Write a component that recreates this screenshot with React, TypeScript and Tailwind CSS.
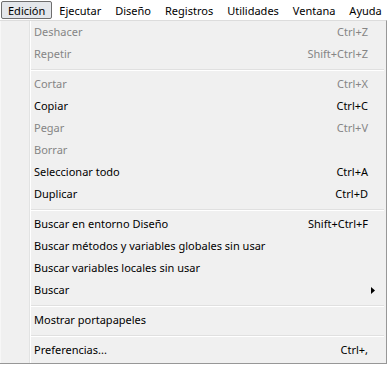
import React from "react";

type Item =
  | { type: "sep" }
  | { type: "item"; label: string; shortcut?: string; disabled?: boolean; submenu?: boolean };

const items: Item[] = [
  { type: "item", label: "Deshacer", shortcut: "Ctrl+Z", disabled: true },
  { type: "item", label: "Repetir", shortcut: "Shift+Ctrl+Z", disabled: true },
  { type: "sep" },
  { type: "item", label: "Cortar", shortcut: "Ctrl+X", disabled: true },
  { type: "item", label: "Copiar", shortcut: "Ctrl+C" },
  { type: "item", label: "Pegar", shortcut: "Ctrl+V", disabled: true },
  { type: "item", label: "Borrar", disabled: true },
  { type: "item", label: "Seleccionar todo", shortcut: "Ctrl+A" },
  { type: "item", label: "Duplicar", shortcut: "Ctrl+D" },
  { type: "sep" },
  { type: "item", label: "Buscar en entorno Diseño", shortcut: "Shift+Ctrl+F" },
  { type: "item", label: "Buscar métodos y variables globales sin usar" },
  { type: "item", label: "Buscar variables locales sin usar" },
  { type: "item", label: "Buscar", submenu: true },
  { type: "sep" },
  { type: "item", label: "Mostrar portapapeles" },
  { type: "sep" },
  { type: "item", label: "Preferencias...", shortcut: "Ctrl+," },
];

const menus = ["Edición", "Ejecutar", "Diseño", "Registros", "Utilidades", "Ventana", "Ayuda"];

export default function App() {
  return (
    <div
      className="w-[388px] h-[365px] bg-white text-[11px] text-black overflow-hidden"
      style={{ fontFamily: '"Noto Sans", "Open Sans", sans-serif' }}
    >
      <div className="flex h-[20px] items-stretch bg-white pl-[1px]">
        {menus.map((m, i) => (
          <div
            key={m}
            className={
              i === 0
                ? "flex items-center px-[6px] my-[1px] border border-[#6e6e6e] rounded-[2px] bg-[#e4e7eb] leading-none"
                : "flex items-center px-[7px] leading-none"
            }
          >
            {m}
          </div>
        ))}
      </div>
      <div className="flex w-[387px] h-[344px] border-t border-r border-b border-t-[#dcdcdc] border-r-[#979797] border-b-[#979797] bg-[#f0f0f0]">
        <div className="w-[30px] shrink-0 border-l border-l-[#f7f7f7] border-r border-r-[#e2e3e3]" />
        <div className="flex-1 border-l border-l-white">
          {items.map((it, idx) =>
            it.type === "sep" ? (
              <div key={idx} className="h-[8px] flex flex-col pt-[4px] pr-[2px]">
                <div className="h-[1px] bg-[#e0e0e0]" />
                <div className="h-[1px] bg-white" />
              </div>
            ) : (
              <div
                key={idx}
                className={
                  "h-[22px] flex items-center pl-[3px] pr-[18px] " +
                  (it.disabled ? "text-[#858585]" : "text-black")
                }
              >
                <span className="flex-1 whitespace-nowrap">{it.label}</span>
                {it.shortcut && <span className="whitespace-nowrap">{it.shortcut}</span>}
                {it.submenu && (
                  <svg width="4" height="7" viewBox="0 0 4 7" className="mr-[-7px]">
                    <path d="M0 0 L4 3.5 L0 7 Z" fill="#000" />
                  </svg>
                )}
              </div>
            )
          )}
        </div>
      </div>
    </div>
  );
}
